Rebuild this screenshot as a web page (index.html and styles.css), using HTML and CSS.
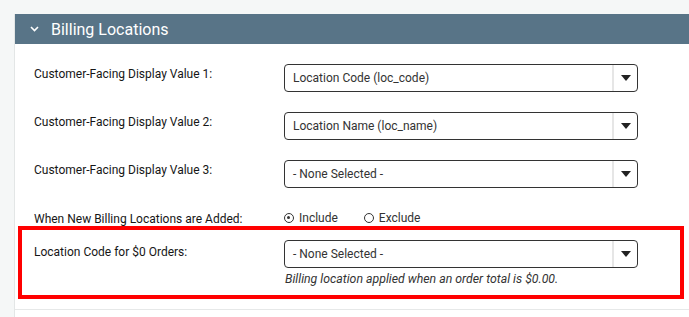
FILE: index.html
```html
<!DOCTYPE html>
<html lang="en">
<head>
    <meta charset="UTF-8">
    <meta name="viewport" content="width=device-width, initial-scale=1.0">
    <title>Billing Locations</title>
    <link rel="stylesheet" href="styles.css">
</head>
<body>
  <div id="panel">
    <div id="panelHead">
      <svg class="chevron" width="9" height="6" viewBox="0 0 9 6"><path d="M1 1 L4.5 4.5 L8 1" fill="none" stroke="#fff" stroke-width="1.6"/></svg>
      <h2>Billing Locations</h2>
    </div>
    <div id="panelBody">
      <div class="row">
        <label>Customer-Facing Display Value 1:</label>
        <div class="select">
          <span class="value">Location Code (loc_code)</span>
          <span class="arrow"><i></i></span>
        </div>
      </div>
      <div class="row">
        <label>Customer-Facing Display Value 2:</label>
        <div class="select">
          <span class="value">Location Name (loc_name)</span>
          <span class="arrow"><i></i></span>
        </div>
      </div>
      <div class="row">
        <label>Customer-Facing Display Value 3:</label>
        <div class="select">
          <span class="value">- None Selected -</span>
          <span class="arrow"><i></i></span>
        </div>
      </div>
      <div class="row radioRow">
        <label>When New Billing Locations are Added:</label>
        <div class="radios">
          <span class="radio checked"><b></b>Include</span>
          <span class="radio"><b></b>Exclude</span>
        </div>
      </div>
      <div class="row highlight">
        <label>Location Code for $0 Orders:</label>
        <div>
          <div class="select">
            <span class="value">- None Selected -</span>
            <span class="arrow"><i></i></span>
          </div>
          <p class="help">Billing location applied when an order total is $0.00.</p>
        </div>
      </div>
    </div>
    <div id="panelFoot"></div>
  </div>
</body>
</html>
```

FILE: styles.css
```css
body
{
    margin: 0;
    background-color: #f5f7f7;
    font-family: Roboto, "Liberation Sans", sans-serif;
    overflow: hidden;
}
#panel
{
    margin: 14px 0 0 14px;
    background-color: #fff;
    border-left: 1px solid #e3e6e6;
}
#panelHead
{
    height: 30px;
    background-color: #587487;
    display: flex;
    align-items: center;
    padding-left: 15px;
}
#panelHead .chevron
{
    margin-right: 12px;
}
#panelHead h2
{
    margin: 0;
    font-size: 16px;
    font-weight: 400;
    color: #fff;
}
#panelBody
{
    padding: 20px 0 10px 3px;
    border-bottom: 1px solid #e6e8e8;
}
#panelFoot
{
    height: 7px;
}
.row
{
    display: grid;
    grid-template-columns: 250px 354px;
    padding-left: 16px;
    margin-bottom: 20px;
}
.row label
{
    font-size: 12px;
    line-height: 16px;
    color: #161616;
    padding-top: 2px;
}
.select
{
    height: 28px;
    box-sizing: border-box;
    border: 1px solid #333;
    border-radius: 4px;
    display: flex;
    align-items: center;
}
.select .value
{
    flex: 1;
    padding-left: 8px;
    font-size: 12px;
    color: #333;
}
.select .arrow
{
    width: 23px;
    height: 100%;
    border-left: 2px solid #e6e6e6;
    display: flex;
    align-items: center;
    justify-content: center;
}
.select .arrow i
{
    width: 0;
    height: 0;
    border-left: 5px solid transparent;
    border-right: 5px solid transparent;
    border-top: 6px solid #222;
}
.radioRow
{
    margin-bottom: 0;
    height: 18px;
}
.radioRow label
{
    padding-top: 3px;
}
.radios
{
    display: flex;
    gap: 26px;
    font-size: 12px;
    color: #333;
    line-height: 14px;
}
.radio
{
    display: flex;
    align-items: center;
}
.radio b
{
    width: 10px;
    height: 10px;
    box-sizing: border-box;
    border: 1.5px solid #333;
    border-radius: 50%;
    margin-right: 5px;
    position: relative;
}
.radio.checked b::after
{
    content: "";
    position: absolute;
    left: 2px;
    top: 2px;
    width: 3px;
    height: 3px;
    border-radius: 50%;
    background: #333;
}
.highlight
{
    width: 646px;
    border: 4px solid #ff0000;
    padding: 10px 0 9px 12px;
    margin-bottom: 0;
}
.highlight label
{
    padding-top: 4px;
}
.help
{
    margin: 4px 0 0 1px;
    font-size: 12.3px;
    line-height: 14px;
    font-style: italic;
    color: #333;
}
```
